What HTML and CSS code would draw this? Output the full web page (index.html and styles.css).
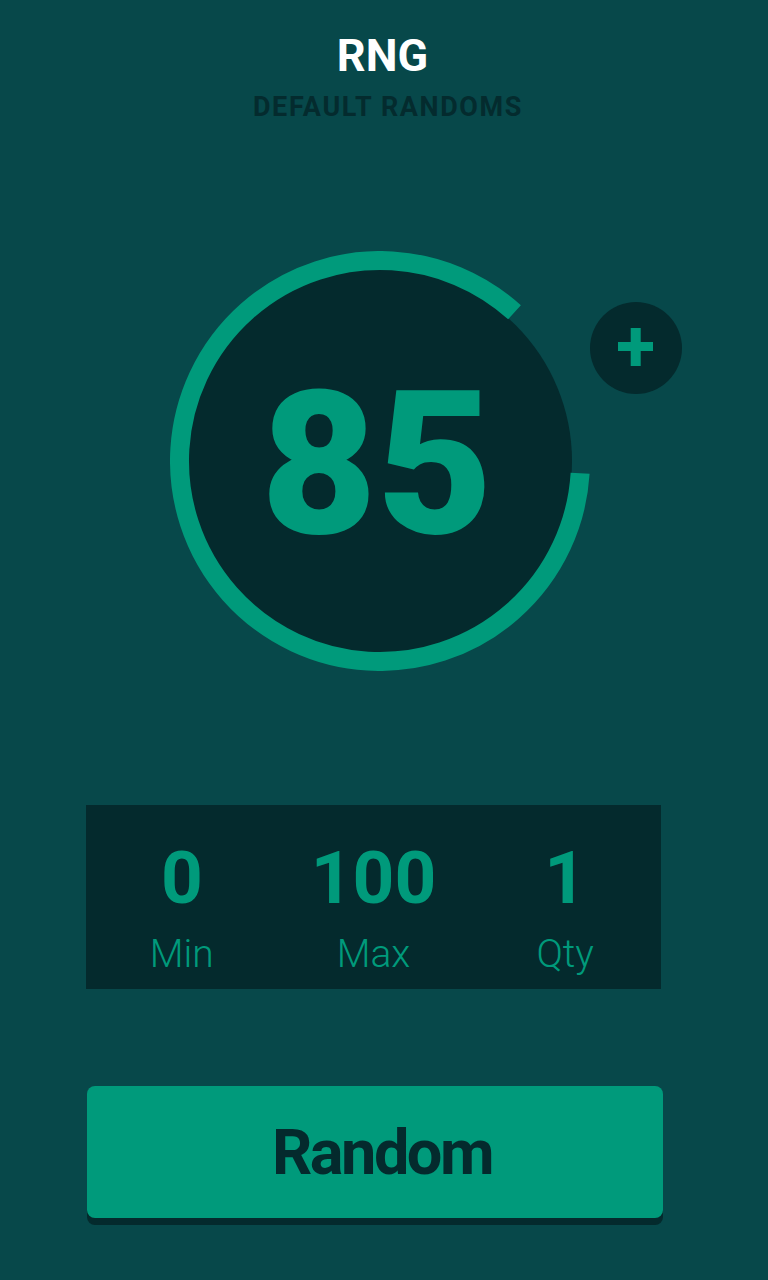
FILE: index.html
```html
<!DOCTYPE html>
<html lang="en">
<head>
<meta charset="utf-8">
<title>RNG</title>
<link rel="stylesheet" href="styles.css">
</head>
<body>
<main class="app">
  <header class="header">
    <h1 class="title">RNG</h1>
    <p class="subtitle">DEFAULT RANDOMS</p>
  </header>

  <section class="dial">
    <svg class="dial-ring" viewBox="0 0 420 420" width="420" height="420" aria-hidden="true">
      <circle cx="210" cy="210" r="192" fill="#042a2d"/>
      <circle cx="210" cy="210" r="200.5" fill="none" stroke="#009a7b" stroke-width="19"
              stroke-dasharray="1079.6 1259.8" transform="rotate(3.5 210 210)"/>
    </svg>
    <div class="dial-value">85</div>
    <button class="add-btn" aria-label="Add">
      <svg viewBox="0 0 92 92" width="92" height="92" aria-hidden="true">
        <rect x="28" y="40" width="35" height="9" fill="#009a7b"/>
        <rect x="40.7" y="26" width="10" height="38" fill="#009a7b"/>
      </svg>
    </button>
  </section>

  <section class="stats">
    <div class="stat">
      <span class="stat-value">0</span>
      <span class="stat-label">Min</span>
    </div>
    <div class="stat">
      <span class="stat-value">100</span>
      <span class="stat-label">Max</span>
    </div>
    <div class="stat">
      <span class="stat-value">1</span>
      <span class="stat-label">Qty</span>
    </div>
  </section>

  <button class="random-btn">Random</button>
</main>
</body>
</html>
```

FILE: styles.css
```css
* { box-sizing: border-box; }

html, body {
  margin: 0;
  padding: 0;
}

body {
  background: #07484a;
  font-family: Roboto, "Liberation Sans", sans-serif;
  width: 768px;
  height: 1280px;
  overflow: hidden;
}

.app {
  display: flex;
  flex-direction: column;
  padding-top: 33px;
}

.header {
  display: flex;
  flex-direction: column;
  align-items: center;
}

.title {
  margin: 0;
  font-size: 45px;
  line-height: 1;
  font-weight: 700;
  color: #ffffff;
  padding-right: 3px;
}

.subtitle {
  margin: 16px 0 0;
  font-size: 27px;
  line-height: 1;
  font-weight: 700;
  color: #042b2e;
  letter-spacing: 1.6px;
  padding-left: 8px;
}

.dial {
  position: relative;
  display: grid;
  place-items: center;
  width: 420px;
  height: 420px;
  margin: 130px 0 0 170px;
}

.dial-ring,
.dial-value {
  grid-area: 1 / 1;
}

.dial-ring { display: block; }

.dial-value {
  font-size: 200px;
  line-height: 1;
  font-weight: 900;
  color: #009a7b;
  margin-left: -6px;
  margin-top: 8px;
}

.add-btn {
  position: absolute;
  left: 420px;
  top: 51px;
  width: 92px;
  height: 92px;
  padding: 0;
  border: none;
  border-radius: 50%;
  background: #042a2d;
  display: grid;
  place-items: center;
}

.add-btn svg { display: block; }

.stats {
  display: grid;
  grid-template-columns: repeat(3, 1fr);
  width: 575px;
  margin: 134px 0 0 86px;
  padding: 37px 0 15px;
  background: #042a2d;
}

.stat {
  display: flex;
  flex-direction: column;
  align-items: center;
}

.stat-value {
  font-size: 73px;
  line-height: 1;
  font-weight: 700;
  color: #009a7b;
}

.stat-label {
  margin-top: 20px;
  font-size: 39px;
  line-height: 1;
  font-weight: 300;
  color: #009a7b;
}

.random-btn {
  width: 576px;
  height: 132px;
  margin: 97px 0 0 87px;
  border: none;
  border-radius: 8px;
  background: #009a7b;
  box-shadow: 0 7px 0 #042a2d;
  font-family: Roboto, "Liberation Sans", sans-serif;
  font-size: 63px;
  line-height: 1;
  font-weight: 700;
  color: #042a2d;
  letter-spacing: -2.5px;
  padding: 0 0 0 14px;
}
```
